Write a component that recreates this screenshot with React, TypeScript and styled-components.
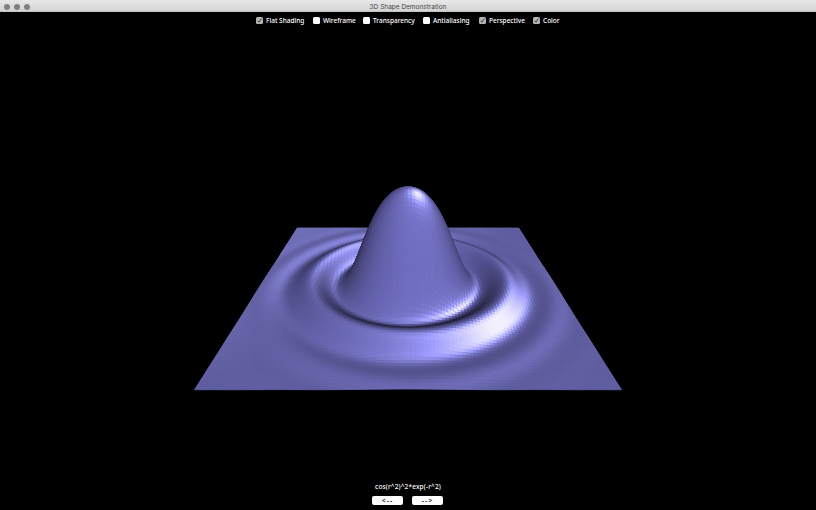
import React from 'react';
import styled, { createGlobalStyle } from 'styled-components';

const GlobalStyle = createGlobalStyle`
  body { margin: 0; background: #000; overflow: hidden; }
`;

const Window = styled.div`
  width: 816px;
  height: 510px;
  display: flex;
  flex-direction: column;
  background: #000;
  color: #fff;
  font: 500 6.5px/10px 'Noto Sans', sans-serif;
`;

const TitleBar = styled.header`
  height: 12px;
  flex: none;
  display: grid;
  grid-template-columns: 60px 1fr 60px;
  align-items: center;
  background: linear-gradient(#e8e8e8, #d2d2d2);
  box-shadow: inset 0 -1px #c4c4c4;
`;

const Lights = styled.div`
  display: flex;
  gap: 4px;
  padding: 1px 0 0 4px;
`;

const Light = styled.span`
  width: 6px;
  height: 6px;
  border-radius: 50%;
  background: #808080;
`;

const Title = styled.h1`
  margin: 0;
  padding-top: 1px;
  text-align: center;
  color: #484848;
  font: 400 6.5px/12px Inter, sans-serif;
  white-space: nowrap;
`;

const Options = styled.div`
  height: 17px;
  flex: none;
  display: flex;
  padding-left: 256px;
`;

const Option = styled.label<{ $w: number }>`
  width: ${p => p.$w}px;
  flex: none;
  display: flex;
  align-items: center;
  gap: 3px;
  white-space: nowrap;
`;

const Box = styled.span<{ $on: boolean }>`
  width: 7px;
  height: 7px;
  flex: none;
  border-radius: 1.5px;
  background: ${p => (p.$on ? '#b4b4b4' : '#fff')};
  svg { display: block; }
`;

const Stage = styled.main`
  flex: 1;
  min-height: 0;
  svg { display: block; }
`;

const Footer = styled.footer`
  flex: none;
  height: 29px;
  display: flex;
  flex-direction: column;
  align-items: center;
`;

const Formula = styled.div`
  box-sizing: border-box;
  height: 15px;
  line-height: 10px;
  padding-top: 1px;
  letter-spacing: 0.14px;
`;

const Buttons = styled.div`
  display: flex;
  gap: 9px;
  padding-right: 1px;
`;

const NavButton = styled.button`
  width: 31px;
  height: 9px;
  padding: 0;
  border: 0;
  border-radius: 2px;
  background: #fff;
  color: #111;
  font: 600 7px/9px 'Noto Sans', sans-serif;
  letter-spacing: 1px;
`;

type Vec = [number, number, number];
const dot = (a: Vec, b: Vec) => a[0] * b[0] + a[1] * b[1] + a[2] * b[2];
const sub = (a: Vec, b: Vec): Vec => [a[0] - b[0], a[1] - b[1], a[2] - b[2]];
const unit = (a: Vec): Vec => {
  const l = Math.hypot(...a);
  return [a[0] / l, a[1] / l, a[2] / l];
};
const cross = (a: Vec, b: Vec): Vec => [
  a[1] * b[2] - a[2] * b[1],
  a[2] * b[0] - a[0] * b[2],
  a[0] * b[1] - a[1] * b[0],
];

const GRID = 100;
const DOMAIN = 2.58;
const HEIGHT = 0.675;
const DECAY = 0.74;
const FORWARD: Vec = [0, 0.9, -0.436];
const UP: Vec = [0, 0.436, 0.9];
const CAMERA: Vec = [0, -2.469, 1.416];
const FOCAL = 414;
const HEADLIGHT = unit([0.14, -0.84, 0.54]);

const surface = (x: number, y: number): Vec => {
  const u = (x * x + y * y) * DOMAIN * DOMAIN;
  return [x, y, HEIGHT * Math.cos(u) ** 2 * Math.exp(-u * DECAY)];
};

const project = (p: Vec) => {
  const q = sub(p, CAMERA);
  const d = dot(q, FORWARD);
  return `${(408 + (FOCAL * q[0]) / d).toFixed(2)},${(254.4 - 29 - (FOCAL * dot(q, UP)) / d).toFixed(2)}`;
};

const DIFFUSE: Vec = [112, 110, 192];
const SPECULAR: Vec = [145, 145, 205];

const shade = (p: Vec, n: Vec) => {
  const facing = Math.pow(Math.max(0, dot(n, HEADLIGHT)), 0.75);
  const far = Math.min(0.6, Math.max(0, (p[1] - p[0]) / 2));
  const tilt = 0.41 - 0.36 * far;
  const lobe = Math.max(0, dot(n, unit([tilt, -tilt, 1])));
  const glint = (1 - 0.95 * far) * (0.3 * Math.pow(lobe, 9) + 0.7 * Math.pow(lobe, 26));
  const c = DIFFUSE.map((k, i) =>
    Math.round(Math.min(255, k * (0.29 + 0.71 * facing) + SPECULAR[i] * glint)));
  return `rgb(${c.join(',')})`;
};

const buildFacets = () => {
  const out: { pts: string; fill: string }[] = [];
  const at = (i: number) => (i / GRID) * 2 - 1;
  for (let j = GRID - 1; j >= 0; j--) {
    const cell = (i: number) => {
      const a = surface(at(i), at(j));
      const b = surface(at(i + 1), at(j));
      const c = surface(at(i + 1), at(j + 1));
      const d = surface(at(i), at(j + 1));
      const n = unit(cross(sub(c, a), sub(d, b)));
      out.push({ pts: [a, b, c, d].map(project).join(' '), fill: shade(a, n) });
    };
    for (let k = 0; k < GRID / 2; k++) {
      cell(k);
      cell(GRID - 1 - k);
    }
  }
  return out;
};

const facets = buildFacets();

const Plot = () => (
  <svg width="816" height="452" viewBox="0 0 816 452">
    {facets.map((f, i) => (
      <polygon key={i} points={f.pts} fill={f.fill} stroke={f.fill} strokeWidth="0.9" />
    ))}
  </svg>
);

const options = [
  { label: 'Flat Shading', on: true, w: 57 },
  { label: 'Wireframe', on: false, w: 50 },
  { label: 'Transparency', on: false, w: 60 },
  { label: 'Antialiasing', on: false, w: 56 },
  { label: 'Perspective', on: true, w: 54 },
  { label: 'Color', on: true, w: 30 },
];

export default function App() {
  return (
    <>
      <GlobalStyle />
      <Window>
        <TitleBar>
          <Lights><Light /><Light /><Light /></Lights>
          <Title>3D Shape Demonstration</Title>
        </TitleBar>
        <Options>
          {options.map(o => (
            <Option key={o.label} $w={o.w}>
              <Box $on={o.on}>
                {o.on && (
                  <svg width="7" height="7" viewBox="0 0 7 7">
                    <path d="M1.7 3.7 3 5.2 5.4 1.6" fill="none" stroke="#333" strokeWidth="0.9" />
                  </svg>
                )}
              </Box>
              {o.label}
            </Option>
          ))}
        </Options>
        <Stage><Plot /></Stage>
        <Footer>
          <Formula>cos(r^2)^2*exp(-r^2)</Formula>
          <Buttons>
            <NavButton>&lt;--</NavButton>
            <NavButton>--&gt;</NavButton>
          </Buttons>
        </Footer>
      </Window>
    </>
  );
}
